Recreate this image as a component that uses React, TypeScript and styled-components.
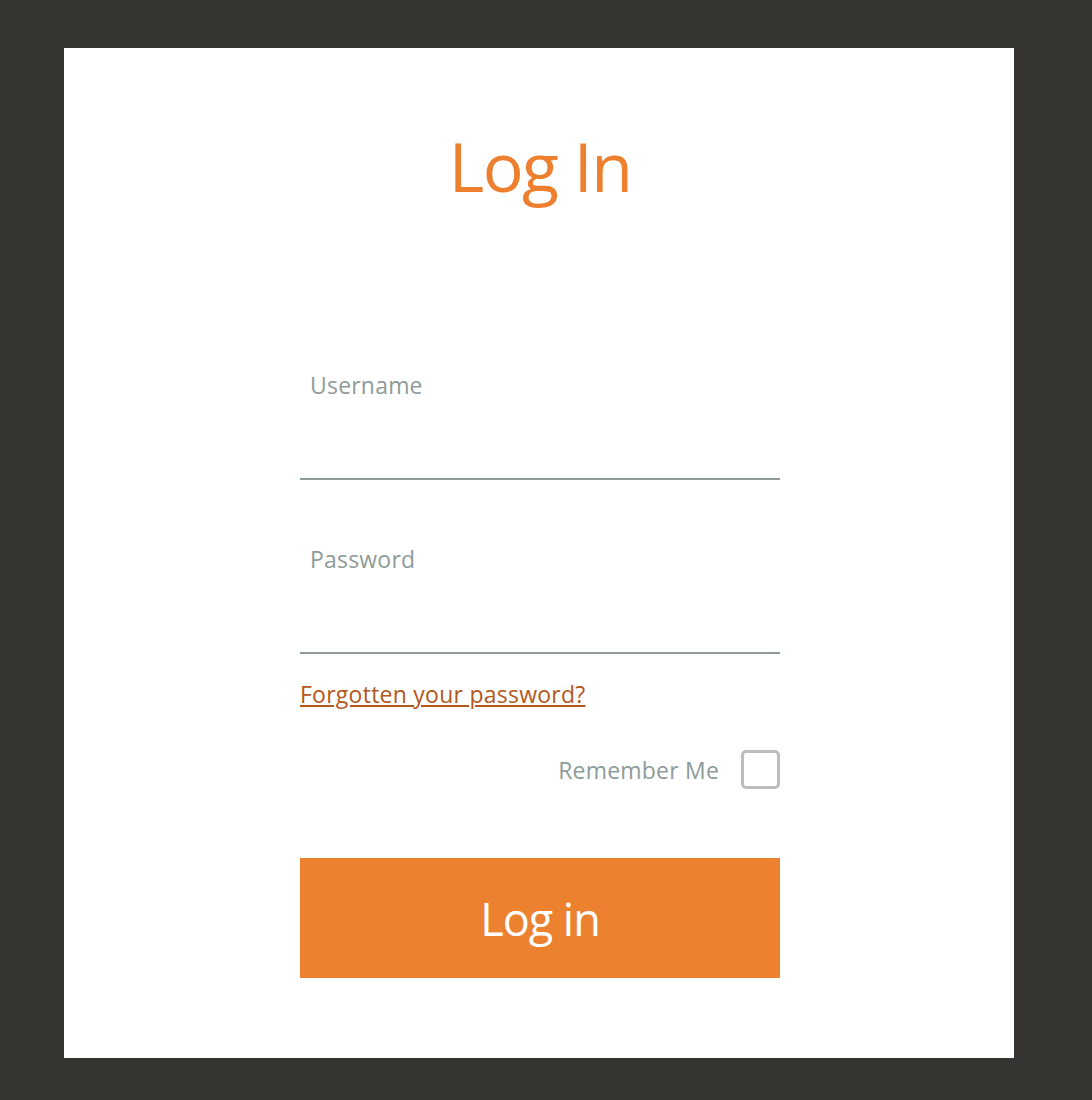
import React from "react";
import styled, { createGlobalStyle } from "styled-components";

const GlobalStyle = createGlobalStyle`
  html, body {
    margin: 0;
    padding: 0;
    background: #363430;
  }
  body {
    font-family: "Open Sans", "Noto Sans", Arial, sans-serif;
  }
`;

const Page = styled.div`
  min-height: 1100px;
  padding: 48px 78px 42px 64px;
  box-sizing: border-box;
  background: #363430;
`;

const Card = styled.main`
  width: 950px;
  height: 1010px;
  background: #ffffff;
  box-sizing: border-box;
  padding-top: 76px;
  padding-left: 2px;
  display: flex;
  flex-direction: column;
  align-items: center;
`;

const Title = styled.h1`
  margin: 0;
  font-family: "Open Sans", sans-serif;
  font-weight: 400;
  font-size: 68px;
  line-height: 84px;
  letter-spacing: -1.5px;
  color: #ed7f2e;
`;

const Form = styled.form`
  width: 480px;
  margin-top: 164px;
  display: flex;
  flex-direction: column;
`;

const Field = styled.label<{ $gap?: number }>`
  display: flex;
  flex-direction: column;
  border-bottom: 2px solid #8f9c9a;
  margin-top: ${(p) => p.$gap ?? 0}px;
`;

const FieldLabel = styled.span`
  padding-left: 10px;
  font-size: 23px;
  line-height: 26px;
  letter-spacing: 0.2px;
  color: #8e9b99;
`;

const Input = styled.input`
  height: 80px;
  border: none;
  outline: none;
  padding: 0 10px;
  background: transparent;
  font-family: inherit;
  font-size: 22px;
`;

const ForgotLink = styled.a`
  align-self: flex-start;
  margin-top: 25px;
  font-size: 23px;
  line-height: 30px;
  letter-spacing: 0.25px;
  color: #b3581c;
  text-decoration: underline;
  text-underline-offset: 2px;
  text-decoration-thickness: 1.5px;
`;

const RememberRow = styled.div`
  margin-top: 41px;
  display: flex;
  justify-content: flex-end;
  align-items: center;
  gap: 22px;
`;

const RememberText = styled.span`
  font-size: 23px;
  line-height: 30px;
  letter-spacing: 0.2px;
  color: #8e9b99;
`;

const CheckBox = styled.span`
  width: 39px;
  height: 39px;
  box-sizing: border-box;
  border: 3px solid #bdbdbd;
  border-radius: 5px;
  background: #fff;
`;

const SubmitButton = styled.button`
  margin-top: 69px;
  height: 120px;
  width: 100%;
  border: none;
  background: #ec8130;
  color: #ffffff;
  font-family: "Open Sans", sans-serif;
  font-size: 45px;
  letter-spacing: -1px;
  font-weight: 400;
  cursor: pointer;
`;

export default function App() {
  return (
    <>
      <GlobalStyle />
      <Page>
        <Card>
          <Title>Log In</Title>
          <Form onSubmit={(e) => e.preventDefault()}>
            <Field>
              <FieldLabel>Username</FieldLabel>
              <Input type="text" aria-label="Username" />
            </Field>
            <Field $gap={66}>
              <FieldLabel>Password</FieldLabel>
              <Input type="password" aria-label="Password" />
            </Field>
            <ForgotLink href="#">Forgotten your password?</ForgotLink>
            <RememberRow>
              <RememberText>Remember Me</RememberText>
              <CheckBox role="checkbox" aria-checked="false" />
            </RememberRow>
            <SubmitButton type="submit">Log in</SubmitButton>
          </Form>
        </Card>
      </Page>
    </>
  );
}
